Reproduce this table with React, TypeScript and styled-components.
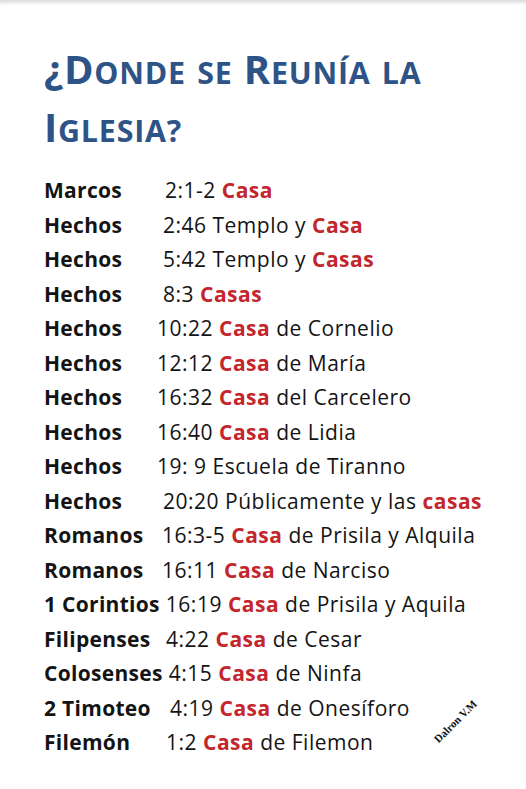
import styled, { createGlobalStyle } from "styled-components";

type Entry = {
  book: string;
  ref: string;
  parts: (string | { red: string })[];
  col: number;
};

const entries: Entry[] = [
  { book: "Marcos", ref: "2:1-2", parts: [{ red: "Casa" }], col: 115 },
  { book: "Hechos", ref: "2:46", parts: ["Templo y ", { red: "Casa" }], col: 113 },
  { book: "Hechos", ref: "5:42", parts: ["Templo y ", { red: "Casas" }], col: 113 },
  { book: "Hechos", ref: "8:3 ", parts: [{ red: "Casas" }], col: 113 },
  { book: "Hechos", ref: "10:22", parts: [{ red: "Casa" }, " de Cornelio"], col: 107 },
  { book: "Hechos", ref: "12:12", parts: [{ red: "Casa" }, " de María"], col: 107 },
  { book: "Hechos", ref: "16:32", parts: [{ red: "Casa" }, " del Carcelero"], col: 107 },
  { book: "Hechos", ref: "16:40", parts: [{ red: "Casa" }, " de Lidia"], col: 107 },
  { book: "Hechos", ref: "19: 9", parts: ["Escuela de Tiranno"], col: 107 },
  { book: "Hechos", ref: "20:20", parts: ["Públicamente y las ", { red: "casas" }], col: 113 },
  { book: "Romanos", ref: "16:3-5", parts: [{ red: "Casa" }, " de Prisila y Alquila"], col: 112 },
  { book: "Romanos", ref: "16:11", parts: [{ red: "Casa" }, " de Narciso"], col: 112 },
  { book: "1 Corintios", ref: "16:19", parts: [{ red: "Casa" }, " de Prisila y Aquila"], col: 0 },
  { book: "Filipenses", ref: "4:22", parts: [{ red: "Casa" }, " de Cesar"], col: 116 },
  { book: "Colosenses", ref: "4:15", parts: [{ red: "Casa" }, " de Ninfa"], col: 0 },
  { book: "2 Timoteo", ref: "4:19", parts: [{ red: "Casa" }, " de Onesíforo"], col: 120 },
  { book: "Filemón", ref: "1:2", parts: [{ red: "Casa" }, " de Filemon"], col: 116 },
];

// title words: first letter full size, the rest as small capitals
const titleLines = [
  ["¿Donde", "se", "Reunía", "la"],
  ["Iglesia?"],
];

const TitleWord = ({ word }: { word: string }) => {
  const lead = word.startsWith("¿") ? 2 : 1;
  const head = word.slice(0, lead);
  const isCap = head[head.length - 1] === head[head.length - 1].toUpperCase();
  if (!isCap) return <Small>{word}</Small>;
  return (
    <>
      {head}
      <Small>{word.slice(lead)}</Small>
    </>
  );
};

export default function App() {
  return (
    <>
      <GlobalStyle />
      <Page>
        <Title>
          {titleLines.map((line, i) => (
            <TitleLine key={i}>
              {line.map((w, j) => (
                <span key={j}>
                  {j > 0 && " "}
                  <TitleWord word={w} />
                </span>
              ))}
            </TitleLine>
          ))}
        </Title>
        <List>
          {entries.map((e, i) => (
            <Row key={i}>
              <Book $col={e.col}>{e.book}</Book>
              <Ref>
                {e.ref}{" "}
                {e.parts.map((p, j) =>
                  typeof p === "string" ? (
                    <span key={j}>{p}</span>
                  ) : (
                    <Red key={j}>{p.red}</Red>
                  )
                )}
              </Ref>
            </Row>
          ))}
        </List>
        <Signature>Dalron V.M</Signature>
      </Page>
    </>
  );
}

const GlobalStyle = createGlobalStyle`
  html, body {
    margin: 0;
    padding: 0;
    background: #fff;
  }
`;

const Page = styled.div`
  position: relative;
  width: 526px;
  height: 789px;
  box-sizing: border-box;
  padding: 40px 0 0 44px;
  background: #fff;
  box-shadow: inset 0 5px 4px -3px rgba(0, 0, 0, 0.18);
  font-family: "Open Sans", "Liberation Sans", sans-serif;
  color: #141414;
  overflow: hidden;
`;

const Title = styled.h1`
  margin: 0 0 20px;
  font-size: 40px;
  font-weight: 700;
  color: #2e5386;
  letter-spacing: 0.8px;
`;

const TitleLine = styled.div`
  height: 58px;
  line-height: 58px;
  white-space: nowrap;
`;

const Small = styled.span`
  text-transform: uppercase;
  font-size: 0.76em;
`;

const List = styled.div`
  display: flex;
  flex-direction: column;
`;

const Row = styled.div`
  display: flex;
  align-items: baseline;
  height: 34.5px;
  font-size: 21px;
  letter-spacing: 0.5px;
  white-space: nowrap;
`;

const Book = styled.span<{ $col: number }>`
  font-weight: 700;
  letter-spacing: 0.3px;
  min-width: ${(p) => p.$col}px;
  margin-right: 6px;
`;

const Ref = styled.span`
  font-weight: 400;
`;

const Red = styled.span`
  color: #c3262c;
  font-weight: 700;
`;

const Signature = styled.div`
  position: absolute;
  left: 440px;
  top: 733px;
  font-family: "Liberation Serif", serif;
  font-weight: 700;
  font-size: 11px;
  transform: rotate(-45deg);
  transform-origin: left bottom;
  color: #111;
`;
